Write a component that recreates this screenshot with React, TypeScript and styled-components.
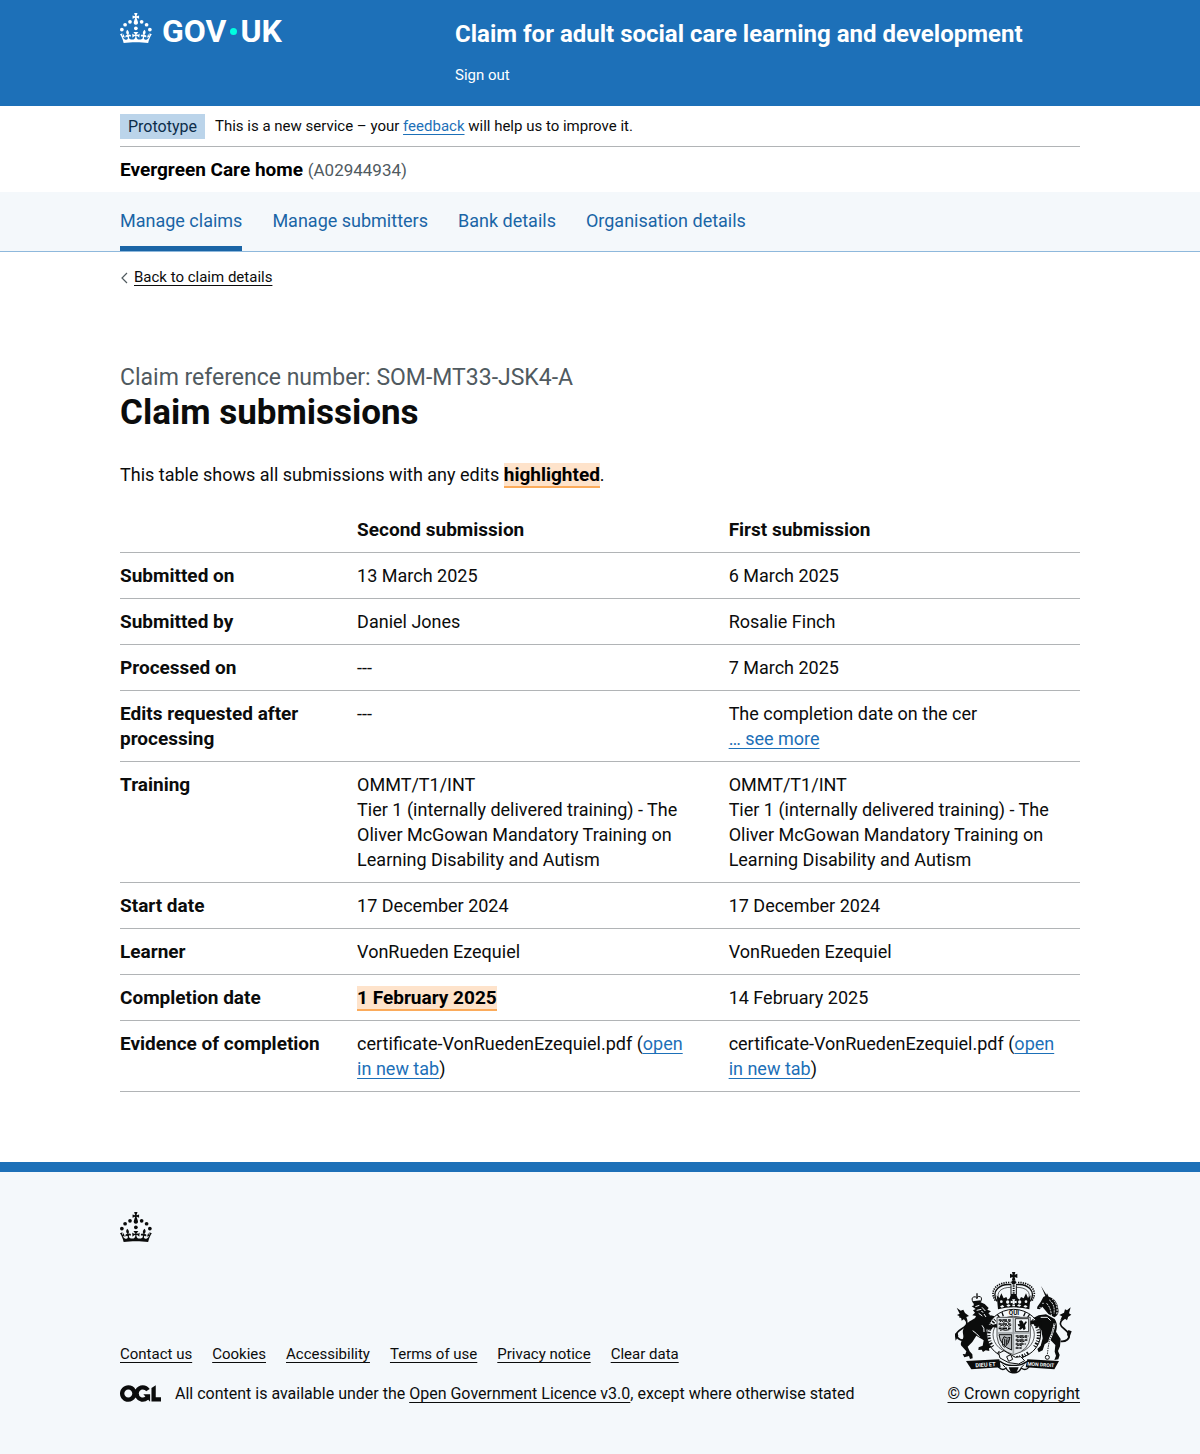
import React from "react";
import styled, { createGlobalStyle, css } from "styled-components";

const BLUE = "#1d70b8";
const INK = "#0b0c0c";
const TINT = "#f4f8fb";
const RULE = "#b1b4b6";

const GlobalStyle = createGlobalStyle`
  *, *::before, *::after { box-sizing: border-box; }
  body {
    margin: 0;
    background: #fff;
    color: ${INK};
    font-family: Roboto, "Liberation Sans", sans-serif;
    font-size: 18px;
    line-height: 25px;
    -webkit-font-smoothing: antialiased;
  }
  svg { display: block; flex: none; }
`;

const Container = styled.div`
  max-width: 960px;
  margin: 0 auto;
  @media (max-width: 1020px) { margin: 0 30px; }
`;

const linkTone = { blue: BLUE, ink: INK };
const Link = styled.a<{ $tone?: "blue" | "ink" }>`
  color: ${(p) => linkTone[p.$tone ?? "blue"]};
  text-decoration: underline;
  text-decoration-thickness: 1px;
  text-underline-offset: 3px;
  text-decoration-skip-ink: none;
`;

/* ---------- Header ---------- */
const Header = styled.header`
  background: ${BLUE};
  color: #fff;
`;
const HeaderRow = styled(Container)`
  display: grid;
  grid-template-columns: 335px 1fr;
  padding: 13px 0 18px;
`;
const Logo = styled.a`
  display: flex;
  align-items: center;
  align-self: start;
  height: 30px;
  color: #fff;
  text-decoration: none;
`;
const LogoWord = styled.span`
  padding-top: 6px;
  font-size: 32px;
  font-weight: 700;
  line-height: 30px;
  svg + & { margin-left: 10px; }
`;
const LogoDot = styled.span`
  width: 7px;
  height: 7px;
  margin: 6px 3px 0 4px;
  border-radius: 50%;
  background: #00ffe0;
`;
const ServiceName = styled.a`
  display: block;
  padding: 6px 0 14px;
  color: #fff;
  font-size: 24px;
  font-weight: 700;
  line-height: 30px;
  text-decoration: none;
`;
const SignOut = styled.a`
  display: block;
  color: #fff;
  font-size: 15px;
  text-decoration: none;
`;

/* ---------- Phase banner and organisation ---------- */
const PhaseBanner = styled(Container)`
  display: flex;
  align-items: center;
  gap: 10px;
  padding: 8px 0 7px;
  border-bottom: 1px solid ${RULE};
  font-size: 15px;
`;
const Tag = styled.strong`
  padding: 0 8px;
  background: #bbd4ea;
  color: #0c2d4a;
  font-size: 16px;
  font-weight: 400;
`;
const Organisation = styled(Container)`
  padding: 10px 0;
  font-size: 19px;
`;
const OrgName = styled.strong`
  color: #000;
  font-weight: 700;
`;
const OrgId = styled.span`
  color: #505a5f;
  font-size: 17px;
  line-height: 20px;
`;

/* ---------- Service navigation ---------- */
const Nav = styled.nav`
  background: ${TINT};
  border-bottom: 1px solid #8eb8dc;
`;
const NavList = styled.ul`
  display: flex;
  flex-wrap: wrap;
  gap: 0 30px;
  margin: 0;
  padding: 0;
  list-style: none;
`;
const NavLink = styled.a<{ $active?: boolean }>`
  display: block;
  padding: 16px 0 13px;
  border-bottom: 5px solid ${(p) => (p.$active ? "#1a65a6" : "transparent")};
  color: #1a65a6;
  text-decoration: none;
`;

/* ---------- Main ---------- */
const BackRow = styled.div`
  display: flex;
  align-items: center;
  gap: 5px;
  padding-top: 13px;
  font-size: 15px;
`;
const Chevron = styled.svg`
  width: 9px;
  height: 12px;
`;
const Main = styled.main`
  padding: 72px 0 70px;
`;
const Caption = styled.span`
  display: block;
  color: #505a5f;
  font-size: 23px;
  line-height: 31px;
`;
const Title = styled.h1`
  margin: 0 0 29px;
  font-size: 35px;
  font-weight: 700;
  line-height: 40px;
`;
const Intro = styled.p`
  margin: 0 0 20px;
`;
const Highlight = styled.strong`
  background: #fee3cb;
  border-bottom: 2px solid #fbab5b;
  color: #000;
  font-size: 19px;
  font-weight: 700;
  line-height: 20px;
`;
const Table = styled.table`
  width: 100%;
  border-collapse: collapse;
  table-layout: fixed;
`;
const Column = styled.col<{ $share: string }>`
  width: ${(p) => p.$share};
`;
const cell = css`
  padding: 10px 30px 10px 0;
  border-bottom: 1px solid ${RULE};
  text-align: left;
  vertical-align: top;
  &:last-child { padding-right: 10px; }
`;
const Th = styled.th`
  ${cell}
  font-size: 19px;
  font-weight: 700;
`;
const Td = styled.td`
  ${cell}
`;

/* ---------- Footer ---------- */
const Footer = styled.footer`
  padding: 40px 0 48px;
  border-top: 10px solid ${BLUE};
  background: ${TINT};
`;
const FooterRow = styled.div`
  display: flex;
  align-items: flex-end;
  justify-content: space-between;
  gap: 30px;
  margin-top: 30px;
`;
const FooterLinks = styled.ul`
  display: flex;
  flex-wrap: wrap;
  gap: 0 20px;
  margin: 0 0 14px;
  padding: 0;
  list-style: none;
  font-size: 15px;
`;
const Licence = styled.div`
  display: flex;
  align-items: center;
  gap: 14px;
  font-size: 16px;
`;
const Copyright = styled.div`
  display: flex;
  flex-direction: column;
  align-items: center;
  gap: 7px;
  font-size: 16px;
`;

function Crown() {
  return (
    <svg width="32" height="30" viewBox="0 0 64 60" fill="currentColor" aria-hidden="true">
      <circle cx="20" cy="17.6" r="3.7" />
      <circle cx="10.2" cy="23.5" r="3.7" />
      <circle cx="3.7" cy="33.2" r="3.7" />
      <circle cx="31.7" cy="30.6" r="3.7" />
      <circle cx="43.3" cy="17.6" r="3.7" />
      <circle cx="53.2" cy="23.5" r="3.7" />
      <circle cx="59.7" cy="33.2" r="3.7" />
      <path d="M33.1,9.8c.2-.1.3-.3.5-.5l4.6,2.4v-6.8l-4.6,1.5c-.1-.2-.3-.3-.5-.5l1.9-5.9h-6.7l1.9,5.9c-.2.1-.3.3-.5.5l-4.6-1.5v6.8l4.6-2.4c.1.2.3.3.5.5l-2.6,8c-.9,2.8,1.2,5.7,4.1,5.7h0c3,0,5.1-2.9,4.1-5.7l-2.6-8ZM37,37.9s-3.4,3.8-4.1,6.1c2.2,0,4.2-.5,6.4-2.8l-.7,8.5c-2-2.8-4.4-4.1-5.7-3.8.1,3.1.5,6.7,5.8,7.2,3.7.3,6.7-1.5,7-3.8.4-2.6-2-4.3-3.7-1.6-1.4-4.5,2.4-6.1,4.9-3.2-1.9-4.5-1.8-7.7,2.4-10.9,3,4,2.6,7.3-1.2,11.1,2.4-1.3,6.2,0,4,4.6-1.2-2.8-3.7-2.2-4.2.2-.3,1.7.7,3.7,3,4.2,1.9.3,4.7-.9,7-5.9-1.3,0-2.4.7-3.9,1.7l2.4-8c.6,2.3,1.4,3.7,2.2,4.5.6-1.6.5-2.8,0-5.3l5,1.8c-2.6,3.6-5.2,8.7-7.3,17.5-7.4-1.1-15.7-1.7-24.5-1.7h0c-8.8,0-17.1.6-24.5,1.7-2.1-8.9-4.7-13.9-7.3-17.5l5-1.8c-.5,2.5-.6,3.7,0,5.3.8-.8,1.6-2.3,2.2-4.5l2.4,8c-1.5-1-2.6-1.7-3.9-1.7,2.3,5,5.2,6.2,7,5.9,2.3-.4,3.3-2.4,3-4.2-.5-2.4-3-3.1-4.2-.2-2.2-4.6,1.6-6,4-4.6-3.7-3.7-4.2-7.1-1.2-11.1,4.2,3.2,4.3,6.4,2.4,10.9,2.5-2.8,6.3-1.3,4.9,3.2-1.8-2.7-4.1-1-3.7,1.6.3,2.3,3.3,4.1,7,3.8,5.4-.5,5.7-4.2,5.8-7.2-1.3-.2-3.7,1-5.7,3.8l-.7-8.5c2.2,2.3,4.2,2.7,6.4,2.8-.7-2.3-4.1-6.1-4.1-6.1h10.6Z" />
    </svg>
  );
}

/* Royal coat of arms: crown, garter, quartered shield, lion and unicorn. */
function RoyalArms() {
  return (
    <svg width="117" height="102" viewBox="51 36 351 306" fill={INK} aria-hidden="true">
      {/* crown */}
      <path d="M222 36h10l-2 8 8-3v13l-8-3 2 9h-10l2-9-8 3V41l8 3z" />
      <circle cx="227" cy="67" r="7" />
      <g fill="none" stroke={INK}>
        <path d="M177 124C158 92 186 70 220 74M277 124C296 92 268 70 234 74" strokeWidth="4" />
        <path d="M184 120C172 96 190 82 218 82M270 120C282 96 264 82 236 82" strokeWidth="2" />
        <path
          d="M172 122C150 88 184 64 218 68M282 122C304 88 270 64 236 68"
          strokeWidth="5"
          strokeDasharray="4 3"
        />
        <path d="M219 76v28M235 76v28" strokeWidth="3" />
        <path d="M227 76v28" strokeWidth="6" strokeDasharray="4 3" />
      </g>
      <path d="M176 106l8 8 6-14 7 15 8-4 4 8 6-4 4-13h16l4 13 6 4 4-8 8 4 7-15 6 14 8-8-4 42q-47-12-94 0z" />
      <g fill={TINT}>
        <circle cx="190" cy="125" r="4" />
        <circle cx="209" cy="126" r="5" />
        <circle cx="245" cy="126" r="5" />
        <circle cx="264" cy="125" r="4" />
        <path d="M222 118h10l-3 6 7-2v8l-7-2 2 5h-8l2-5-7 2v-8l7 2z" />
        <path d="M186 139l8-4 5 5-8 3zM205 136l8-3 5 4-8 3zM223 134h8v5h-8zM237 137l5-4 8 3-5 4zM256 140l5-5 8 4-5 4z" />
      </g>

      {/* lion */}
      <g>
        <path
          d="M106 128q-8-14 1-17 5-3 9 3 4-7 11-4 7 5 0 17z"
          fill={TINT}
          stroke={INK}
          strokeWidth="3"
        />
        <path d="M104 124l24-3v5l-23 3zM115 100h4v16h-4z" />
        <path d="M106 130l20-4 14 6 12 12-4 5 11 5-8 6 6 9-10-1 2 12-9-4-1 13-10-8-5 8-5-13-9 2 4-10-11-2 8-8-6-7 8-4-12-8 7-3z" />
        <path d="M112 174c-14 8-34 18-36 34-5 10 4 20-2 30-6 8-8 18-1 22l12 14-3 9-8-1 5 10 14-4 3 9 8-2-1-12-8-9-6-14 14-14 12-19 22 14-3 16-12 5-1 8 10-1 4 7 8-5 11 2-1-8 7-3-6-9 4-22-14-18 6-16 14 5 3 9 10-2-2-9 8-5-10-8-15-5-4-20-16-6z" />
        <path d="M144 176l14-10 12 3 6 10-12 2-4 6-14 4z" />
        <path
          d="M80 238c-10 6-20 0-25-12 0-16 22-18 31-32 4-14-10-22-22-24"
          fill="none"
          stroke={INK}
          strokeWidth="5"
        />
        <path d="M56 143l12 9 8-3 5 10 12 9-8 3 4 12-10-7-8 6-2-11-12-6 8-4zM50 222l8-6 3 12-8 14z" />
        <g fill="none" stroke={TINT} strokeWidth="3">
          <path d="M112 140l12-4M116 151l14-3M132 142l10 11M122 160l11 8M138 162l6 9M130 154l6 3" />
          <path d="M104 212q12 8 20 18M96 262l6 8M132 196q8 8 6 20" />
        </g>
      </g>

      {/* unicorn */}
      <g>
        <path d="M309 78l18 29-4 3z" />
        <path d="M298 140l10-14 8-15 8-4 3-7 5 10c18 4 28 20 29 38 3 12-4 20-12 24l-18-10-18-22-8 8-8-2z" />
        <g fill="none" stroke={TINT} strokeWidth="3">
          <path
            d="M334 120q18 14 14 42M326 130q14 16 14 38M342 116q20 16 14 48"
            strokeDasharray="6 3"
          />
          <path d="M312 130h6M304 142l5 2" strokeWidth="2" />
        </g>
        <path d="M302 166l22-3 26 14c8 12 8 24 4 38l14 22-2 22-6 14 5 12-4 13-12 2 5-13-4-12 2-20-14-14-18 12-6 18-12 6-4-10 10-10 6-22-4-24-16-22-10-2-9 10-8-5 3-11 14-6z" />
        <path
          d="M368 244c16 2 28-8 25-20-4-16-24-18-26-32 0-12 12-18 22-20"
          fill="none"
          stroke={INK}
          strokeWidth="5"
        />
        <path d="M398 142l-11 9-6-3-3 10-14 7 8 4-5 12 12-6 8 6 3-10 10-7-7-4zM401 214l-10-4-4 14 6 12z" />
        <path
          d="M350 190q-6 30-14 46-6 22-8 50"
          fill="none"
          stroke={TINT}
          strokeWidth="6"
        />
        <path
          d="M308 172h20l10 10"
          fill="none"
          stroke={TINT}
          strokeWidth="3"
        />
        <path
          d="M350 190q-6 30-14 46-6 22-8 50"
          fill="none"
          stroke={INK}
          strokeWidth="3"
          strokeDasharray="4 3"
        />
        <circle cx="328" cy="292" r="6" fill="none" stroke={INK} strokeWidth="3" />
      </g>

      {/* garter */}
      <ellipse cx="227" cy="222" rx="81" ry="74" fill={TINT} stroke={INK} strokeWidth="3" />
      <path
        d="M164 260A72 65 0 0 1 172 180M290 260A72 65 0 0 0 282 180M180 276q20 16 47 18 27-2 47-18"
        fill="none"
        stroke={INK}
        strokeWidth="10"
        strokeDasharray="3 5 5 4"
      />
      <path d="M178 163l8 12M192 157l4 12M262 157l-5 12M275 162l-7 12" stroke={INK} strokeWidth="4" />
      <ellipse cx="227" cy="224" rx="62" ry="55" fill={TINT} stroke={INK} strokeWidth="2" />
      <text x="228" y="166" fontSize="19" fontWeight="700" textAnchor="middle">
        QUI
      </text>
      <path d="M137 190l24 6 14-5 4 12-14-1-6 8-18-6z" />
      <path d="M312 186l-20-6-16 3-2 12 12-3 8 8 16-2z" />

      {/* shield */}
      <path d="M177 172h100v58q-4 42-50 54-46-12-50-54z" fill="#e2e6e9" stroke={INK} strokeWidth="2" />
      <g fill="none" stroke={INK} strokeWidth="5">
        <path d="M182 180h38M182 192h38M182 205h38" strokeDasharray="9 2 14 3 8 2" />
        <path
          d="M185 186l6-4 6 5 7-4 6 4 8-4M185 199l8-4 6 4 7-4 6 4 8-4M186 211l8-2 8 2 12-2"
          strokeWidth="3"
        />
        <path d="M233 228h38M233 240h36M233 252h30M233 264h18" strokeDasharray="9 2 13 3 8 2" />
        <path d="M236 234l8-3 8 3 8-3 8 3M236 246l8-3 8 3 8-3M236 258l8-3 8 3" strokeWidth="3" />
      </g>
      <path d="M232 176h40v39h-40z" fill={TINT} stroke={INK} strokeWidth="2.5" />
      <path d="M243 183l7-2 5 4 2 6 6-7 4 2-6 10 2 10-6 5-3-7-6 5-6-2 5-7-6-2-2-6 6 1z" />
      <path d="M183 224h38v46q-34-12-38-46z" fill="#b9bdc0" stroke={INK} strokeWidth="3" />
      <path
        d="M194 256q-4-18 4-26 10 8 18 2-2 18-16 30zM200 236v20M205 238v16M210 238v10"
        fill="none"
        stroke={INK}
        strokeWidth="3"
      />
      <path d="M226 173v108M178 219h97" stroke="#9ca1a4" strokeWidth="5" />

      {/* buckle and compartment */}
      <path
        d="M182 280l16-8 34 20 16-2 12 12-18 10-30-4-26-14z"
        fill={TINT}
        stroke={INK}
        strokeWidth="3"
      />
      <path d="M206 290l12-6 6 14-12 6z" fill="none" stroke={INK} strokeWidth="3" />
      <path
        d="M186 304q-10 8-4 18 12 12 22 2 8 16 23 14 15 2 23-14 12 10 22-2 6-10-4-18-20 14-41 12-21 2-41-12z"
        fill={TINT}
        stroke={INK}
        strokeWidth="4"
      />
      <path d="M212 322h30l-6 14q-9 6-18 0z" />
      <path d="M194 314l8 8M258 314l-8 8" stroke={INK} strokeWidth="3" />

      {/* motto ribbon */}
      <path d="M84 303l100-5 4 24-88 6z" />
      <path d="M268 298l95 5-14 25-86-6z" />
      <g fill={TINT} fontSize="17" fontWeight="700" textAnchor="middle">
        <text x="143" y="320" transform="rotate(-4 143 320)">
          DIEU ET
        </text>
        <text x="308" y="319" fontSize="15" transform="rotate(4 308 319)">
          MON DROIT
        </text>
      </g>
    </svg>
  );
}

function OglLogo() {
  return (
    <svg width="41" height="17" viewBox="0 0 483.2 195.7" fill={INK} aria-hidden="true">
      <path d="M421.5 142.8V.1l-50.7 32.3v161.1h112.4v-50.7zm-122.3-9.6A47.12 47.12 0 0 1 221 97.8c0-26 21.1-47.1 47.1-47.1 16.7 0 31.4 8.7 39.7 21.8l42.7-27.2A97.63 97.63 0 0 0 268.1 0c-36.5 0-68.3 20.1-85.1 49.7A98 98 0 0 0 97.8 0C43.9 0 0 43.9 0 97.8s43.9 97.8 97.8 97.8c36.5 0 68.3-20.1 85.1-49.7a97.76 97.76 0 0 0 149.6 25.4l19.4 22.2h3v-87.8h-80l24.3 27.5zM97.8 145c-26 0-47.1-21.1-47.1-47.1s21.1-47.1 47.1-47.1 47.1 21.1 47.1 47.1S123.8 145 97.8 145" />
    </svg>
  );
}

const columns = ["Second submission", "First submission"];
const training = (
  <>
    OMMT/T1/INT
    <br />
    Tier 1 (internally delivered training) - The Oliver McGowan Mandatory Training on Learning
    Disability and Autism
  </>
);
const evidence = (
  <>
    certificate-VonRuedenEzequiel.pdf (<Link href="#evidence">open in new tab</Link>)
  </>
);
const rows: { label: string; cells: React.ReactNode[] }[] = [
  { label: "Submitted on", cells: ["13 March 2025", "6 March 2025"] },
  { label: "Submitted by", cells: ["Daniel Jones", "Rosalie Finch"] },
  { label: "Processed on", cells: ["---", "7 March 2025"] },
  {
    label: "Edits requested after processing",
    cells: [
      "---",
      <>
        The completion date on the cer
        <br />
        <Link href="#more">… see more</Link>
      </>,
    ],
  },
  { label: "Training", cells: [training, training] },
  { label: "Start date", cells: ["17 December 2024", "17 December 2024"] },
  { label: "Learner", cells: ["VonRueden Ezequiel", "VonRueden Ezequiel"] },
  {
    label: "Completion date",
    cells: [<Highlight>1 February 2025</Highlight>, "14 February 2025"],
  },
  { label: "Evidence of completion", cells: [evidence, evidence] },
];
const navItems = ["Manage claims", "Manage submitters", "Bank details", "Organisation details"];
const footerItems = [
  "Contact us",
  "Cookies",
  "Accessibility",
  "Terms of use",
  "Privacy notice",
  "Clear data",
];

export default function App() {
  return (
    <>
      <GlobalStyle />
      <Header>
        <HeaderRow>
          <Logo href="#home" aria-label="GOV.UK">
            <Crown />
            <LogoWord>GOV</LogoWord>
            <LogoDot />
            <LogoWord>UK</LogoWord>
          </Logo>
          <div>
            <ServiceName href="#service">
              Claim for adult social care learning and development
            </ServiceName>
            <SignOut href="#sign-out">Sign out</SignOut>
          </div>
        </HeaderRow>
      </Header>
      <PhaseBanner>
        <Tag>Prototype</Tag>
        <span>
          This is a new service – your <Link href="#feedback">feedback</Link> will help us to
          improve it.
        </span>
      </PhaseBanner>
      <Organisation>
        <OrgName>Evergreen Care home</OrgName> <OrgId>(A02944934)</OrgId>
      </Organisation>
      <Nav aria-label="Service">
        <Container>
          <NavList>
            {navItems.map((item, i) => (
              <li key={item}>
                <NavLink href="#nav" $active={i === 0}>
                  {item}
                </NavLink>
              </li>
            ))}
          </NavList>
        </Container>
      </Nav>
      <Container>
        <BackRow>
          <Chevron viewBox="0 0 9 12" fill="none" stroke="#505a5f" strokeWidth="1.2">
            <path d="M7 1L2 6l5 5" />
          </Chevron>
          <Link href="#back" $tone="ink">
            Back to claim details
          </Link>
        </BackRow>
        <Main>
          <Caption>Claim reference number: SOM-MT33-JSK4-A</Caption>
          <Title>Claim submissions</Title>
          <Intro>
            This table shows all submissions with any edits <Highlight>highlighted</Highlight>.
          </Intro>
          <Table>
            <colgroup>
              <Column $share="24.7%" />
              <Column $share="38.7%" />
              <Column $share="36.6%" />
            </colgroup>
            <thead>
              <tr>
                <Td />
                {columns.map((c) => (
                  <Th key={c} scope="col">
                    {c}
                  </Th>
                ))}
              </tr>
            </thead>
            <tbody>
              {rows.map((row) => (
                <tr key={row.label}>
                  <Th scope="row">{row.label}</Th>
                  {row.cells.map((content, i) => (
                    <Td key={i}>{content}</Td>
                  ))}
                </tr>
              ))}
            </tbody>
          </Table>
        </Main>
      </Container>
      <Footer>
        <Container>
          <Crown />
          <FooterRow>
            <div>
              <FooterLinks>
                {footerItems.map((item) => (
                  <li key={item}>
                    <Link href="#footer" $tone="ink">
                      {item}
                    </Link>
                  </li>
                ))}
              </FooterLinks>
              <Licence>
                <OglLogo />
                <span>
                  All content is available under the{" "}
                  <Link href="#ogl" $tone="ink">
                    Open Government Licence v3.0
                  </Link>
                  , except where otherwise stated
                </span>
              </Licence>
            </div>
            <Copyright>
              <RoyalArms />
              <Link href="#crown" $tone="ink">
                © Crown copyright
              </Link>
            </Copyright>
          </FooterRow>
        </Container>
      </Footer>
    </>
  );
}
